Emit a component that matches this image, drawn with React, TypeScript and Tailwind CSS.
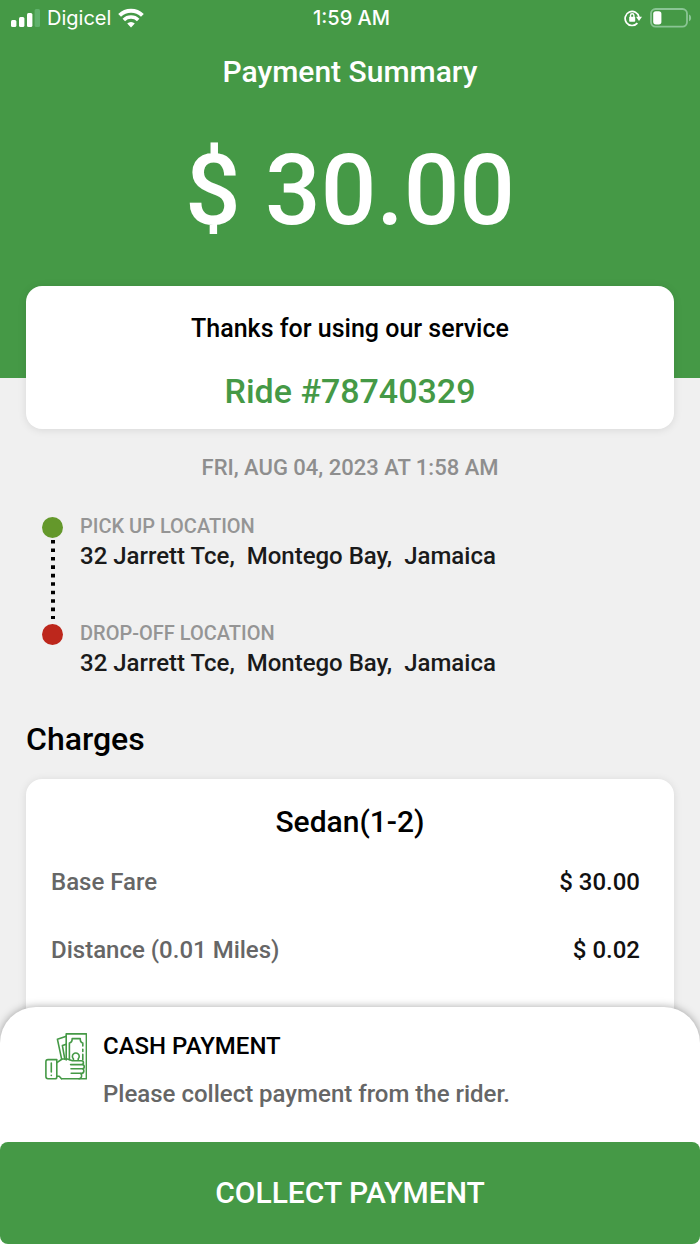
import React from 'react';

interface Stop {
  label: string;
  address: string;
  dotClass: string;
}

interface Charge {
  label: string;
  amount: string;
}

const stops: Stop[] = [
  { label: 'PICK UP LOCATION', address: '32 Jarrett Tce,  Montego Bay,  Jamaica', dotClass: 'bg-[#64982b]' },
  { label: 'DROP-OFF LOCATION', address: '32 Jarrett Tce,  Montego Bay,  Jamaica', dotClass: 'bg-[#bd271c]' },
];

const charges: Charge[] = [
  { label: 'Base Fare', amount: '$ 30.00' },
  { label: 'Distance (0.01 Miles)', amount: '$ 0.02' },
];

const SignalIcon = () => (
  <svg width="29" height="18" viewBox="0 0 29 18" fill="white" aria-hidden="true">
    <rect x="0" y="11" width="5.4" height="7" rx="1.5" />
    <rect x="8" y="8" width="5.4" height="10" rx="1.5" />
    <rect x="16" y="4" width="5.4" height="14" rx="1.5" />
    <rect x="23.6" y="0" width="5.4" height="18" rx="1.5" fill="#5fb16b" />
  </svg>
);

const WifiIcon = () => (
  <svg width="26" height="20" viewBox="0 0 26 20" fill="none" stroke="white" aria-hidden="true">
    <path d="M1.6 7.4a16.2 16.2 0 0 1 22.8 0" strokeWidth="4" />
    <path d="M5.8 11.9a10.2 10.2 0 0 1 14.4 0" strokeWidth="3.5" />
    <path d="M13 19.4l-3.8-3.9a5.3 5.3 0 0 1 7.6 0z" fill="white" stroke="none" />
  </svg>
);

const RotationLockIcon = () => (
  <svg width="18" height="18" viewBox="0 0 18 18" fill="none" stroke="white" aria-hidden="true">
    <path d="M13.4 14.1A7 7 0 1 1 15 8.2" strokeWidth="1.7" />
    <path d="M12 7.8h6l-3 4.2z" fill="white" stroke="none" />
    <rect x="5.2" y="7.8" width="6" height="5" rx="0.8" fill="white" stroke="none" />
    <path d="M6.5 8V6.4a1.7 1.7 0 0 1 3.4 0V8" strokeWidth="1.4" />
  </svg>
);

const BatteryIcon = () => (
  <svg width="42" height="20" viewBox="0 0 42 20" fill="none" aria-hidden="true">
    <rect x="1" y="1" width="36" height="17.6" rx="4.6" stroke="#8ac594" strokeWidth="1.8" />
    <path d="M39 6.4c2.8 1 2.8 5.8 0 6.8z" fill="#8ac594" />
    <rect x="3.2" y="3.2" width="8.2" height="13.2" rx="2.6" fill="white" />
  </svg>
);

const CashIcon = () => (
  <svg
    className="mt-[3px] shrink-0"
    width="42"
    height="47"
    viewBox="0 0 42 47"
    fill="none"
    stroke="#459946"
    strokeWidth="1.6"
    strokeLinecap="round"
    strokeLinejoin="round"
    aria-hidden="true"
  >
    {/* notes */}
    <path d="M21.2 27V.9h20.2v44.8H16.5" />
    <path d="M20.6 3.4l-8.2 2.8 4.2 19.6" />
    <path d="M20.6 11.4l-3.2 1.2 2.4 13.6" />
    <path d="M24.4 26.6V10c1.8-.2 2.8-1.8 2.8-4.4h8c0 2.6.8 4.2 2.6 4.4v3M37.8 16.2v2.2M37.8 21.4v5.6" />
    <path d="M28.4 27.2v-1.4a3.4 3.4 0 1 1 4.8 0v1.4" />
    {/* hand */}
    <path d="M12.2 29.4l5-3.4h5.2l5 1.8h8.8c3 0 3 3.8 0 3.8H25.6M37 31.6c3 0 3 4.2 0 4.2H26M37 35.8c2.6.2 2.4 4.4-.4 4.4H26.2M35.4 40.2c2.2 1.2 1.4 5.5-1.4 5.5M12.2 43.2h2l2.3 2.5" />
    {/* cuff */}
    <path d="M11.8 26.6H3c-1.4 0-2.1.8-2.1 2.2v14.8c0 1.4.7 2.2 2.1 2.2h7c1.2 0 1.8-.8 1.8-1.8zM6.3 30v9M6.3 42.2v.3" />
  </svg>
);

const StatusBar = () => (
  <div className="grid grid-cols-3 items-center h-9 pl-[11px] pr-2 font-[Inter,sans-serif] text-xl">
    <div className="flex items-center gap-[7px] font-normal">
      <SignalIcon />
      <span>Digicel</span>
      <WifiIcon />
    </div>
    <span className="text-center">1:59 AM</span>
    <div className="flex items-center justify-end gap-2">
      <RotationLockIcon />
      <BatteryIcon />
    </div>
  </div>
);

const App: React.FC = () => {
  return (
    <div className="flex flex-col h-screen bg-[#f0f0f0] font-[Roboto,sans-serif] font-medium text-black">
      <main className="flex-1 min-h-0 overflow-hidden">
        <header className="bg-[#459946] text-white text-center pb-34">
          <StatusBar />
          <h1 className="text-[30px] leading-10 pt-4">Payment Summary</h1>
          <p className="text-[98px] leading-[102px] pt-12">$ 30.00</p>
        </header>

        <section className="relative -mt-[92px] mx-[26px] bg-white rounded-2xl shadow-[0_1px_8px_rgba(0,0,0,0.1)] text-center pt-[25px] pb-[18px]">
          <p className="text-[25px] leading-9">Thanks for using our service</p>
          <h2 className="text-[34px] leading-10 pt-6 text-[#459946]">Ride #78740329</h2>
        </section>

        <p className="text-center text-[22px] leading-7 text-[#8e8e8e] pt-[25px]">FRI, AUG 04, 2023 AT 1:58 AM</p>

        <ul className="pt-[30px] pl-[42px] pr-6">
          {stops.map((stop, i) => (
            <li key={stop.label} className="flex gap-[17px]">
              <div className="flex flex-col items-center pt-[5px]">
                <span className={`size-[21px] shrink-0 rounded-full ${stop.dotClass}`} />
                {i < stops.length - 1 && (
                  <svg width="4" height="81" aria-hidden="true">
                    <line x1="2" y1="2" x2="2" y2="81" stroke="black" strokeWidth="4" strokeDasharray="3.6 4.85" />
                  </svg>
                )}
              </div>
              <div>
                <p className="text-xl leading-7 text-[#959595]">{stop.label}</p>
                <p className="text-2xl leading-8 whitespace-pre-wrap text-[#1a1a1a]">{stop.address}</p>
              </div>
            </li>
          ))}
        </ul>

        <h2 className="text-[32px] leading-10 px-[26px] pt-10">Charges</h2>

        <section className="mt-5 mx-[26px] bg-white rounded-2xl shadow-[0_1px_8px_rgba(0,0,0,0.1)] px-[25px] pt-[25px] pb-24">
          <h3 className="text-center text-3xl leading-9">Sedan(1-2)</h3>
          <dl className="pt-[26px]">
            {charges.map((charge) => (
              <div key={charge.label} className="flex justify-between pr-[9px] pb-9 text-2xl leading-8">
                <dt className="text-[#666666]">{charge.label}</dt>
                <dd className="text-[#111111]">{charge.amount}</dd>
              </div>
            ))}
          </dl>
        </section>
      </main>

      <footer className="relative -mt-9 bg-white rounded-t-[36px] shadow-[0_0_8px_rgba(0,0,0,0.35)]">
        <div className="flex gap-4 pl-[45px] pr-6 pt-[23px] pb-8">
          <CashIcon />
          <div>
            <h2 className="text-2xl leading-8">CASH PAYMENT</h2>
            <p className="text-2xl leading-8 pt-4 text-[#666666]">Please collect payment from the rider.</p>
          </div>
        </div>
        <button type="button" className="block w-full h-[102px] rounded-lg bg-[#459946] text-white text-3xl">
          COLLECT PAYMENT
        </button>
      </footer>
    </div>
  );
};

export default App;
